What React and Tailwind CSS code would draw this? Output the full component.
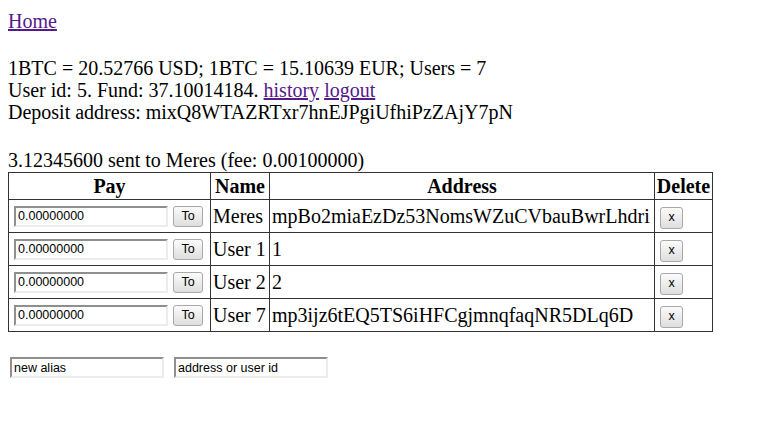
const contacts = [
  { name: 'Meres', address: 'mpBo2miaEzDz53NomsWZuCVbauBwrLhdri' },
  { name: 'User 1', address: '1' },
  { name: 'User 2', address: '2' },
  { name: 'User 7', address: 'mp3ijz6tEQ5TS6iHFCgjmnqfaqNR5DLq6D' },
];

const inputCls =
  "box-border h-[21px] w-[154px] border-2 border-t-[#8f8f8f] border-l-[#8f8f8f] border-b-[#ececec] border-r-[#ececec] bg-white px-[2px] text-[12.5px] text-black outline-none [font-family:'Liberation_Sans',Arial,sans-serif]";

const btnCls =
  "box-border h-[21px] rounded-[3px] border border-[#a9a9a9] bg-gradient-to-b from-[#fbfbfb] to-[#dedede] text-[12.5px] leading-none text-black [font-family:'Liberation_Sans',Arial,sans-serif]";

const Link = ({ children }) => (
  <a href="#" className="text-[#551a8b] underline">
    {children}
  </a>
);

export default function App() {
  return (
    <div className="min-h-[421px] bg-white px-[8px] pt-[10px] text-[20px] leading-[22px] text-black [font-family:'Liberation_Serif','Times_New_Roman',serif]">
      <div>
        <Link>Home</Link>
      </div>

      <div className="mt-[25px]">
        <div>1BTC = 20.52766 USD; 1BTC = 15.10639 EUR; Users = 7</div>
        <div>
          User id: 5. Fund: 37.10014184. <Link>history</Link> <Link>logout</Link>
        </div>
        <div>Deposit address: mixQ8WTAZRTxr7hnEJPgiUfhiPzZAjY7pN</div>
      </div>

      <div className="mt-[26px]">3.12345600 sent to Meres (fee: 0.00100000)</div>

      <table className="mt-[1px] w-[704px] table-fixed border-collapse border border-[#333]">
        <colgroup>
          <col className="w-[202px]" />
          <col className="w-[59px]" />
          <col className="w-[385px]" />
          <col className="w-[58px]" />
        </colgroup>
        <thead>
          <tr className="h-[27px]">
            {['Pay', 'Name', 'Address', 'Delete'].map((h) => (
              <th key={h} className="whitespace-nowrap border border-[#333] p-0 text-center font-bold">
                {h}
              </th>
            ))}
          </tr>
        </thead>
        <tbody>
          {contacts.map((c) => (
            <tr key={c.name} className="h-[33px]">
              <td className="border border-[#333] p-0 pl-[5px]">
                <div className="flex items-center">
                  <input className={inputCls} defaultValue="0.00000000" />
                  <button className={`${btnCls} ml-[5px] w-[30px]`}>To</button>
                </div>
              </td>
              <td className="whitespace-nowrap border border-[#333] px-[2px] py-0">{c.name}</td>
              <td className="whitespace-nowrap border border-[#333] px-[2px] py-0">{c.address}</td>
              <td className="border border-[#333] p-0 pl-[5px]">
                <button className={`${btnCls} h-[22px] w-[23px]`}>x</button>
              </td>
            </tr>
          ))}
        </tbody>
      </table>

      <div className="mt-[25px] flex gap-[10px] pl-[2px]">
        <input className={inputCls} defaultValue="new alias" />
        <input className={inputCls} defaultValue="address or user id" />
      </div>
    </div>
  );
}
